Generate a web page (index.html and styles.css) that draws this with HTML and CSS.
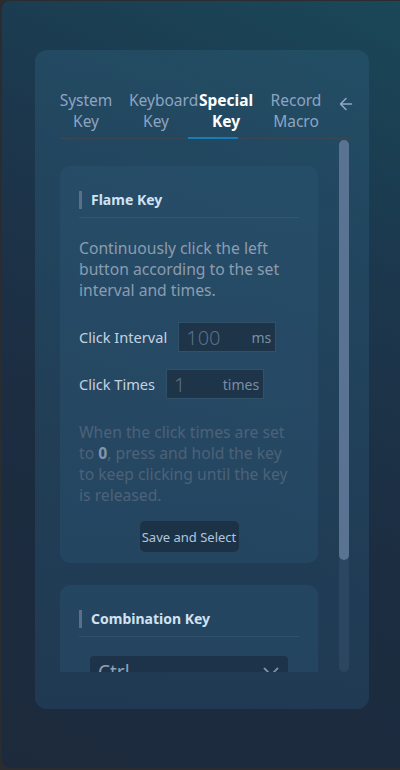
FILE: index.html
```html
<!DOCTYPE html>
<html lang="en">
<head>
<meta charset="utf-8">
<link rel="stylesheet" href="styles.css">
</head>
<body>
<div class="window">
  <div class="panel">
    <div class="tabs">
      <div class="tab">System Key</div>
      <div class="tab">Keyboard Key</div>
      <div class="tab active">Special Key</div>
      <div class="tab">Record Macro</div>
      <div class="back">
        <svg width="14" height="14" viewBox="0 0 14 14"><path d="M12.5 7H1.5M7 1.5L1.5 7L7 12.5" fill="none" stroke="#8fa6c6" stroke-width="1.6" stroke-linecap="round" stroke-linejoin="round"/></svg>
      </div>
      <div class="indicator"></div>
    </div>
    <div class="scroll">
      <div class="scroll-content">
        <div class="card">
          <div class="card-title">Flame Key</div>
          <p class="desc">Continuously click the left button according to the set interval and times.</p>
          <div class="field">
            <span class="label">Click Interval</span>
            <div class="input"><span class="value">100</span><span class="unit">ms</span></div>
          </div>
          <div class="field">
            <span class="label">Click Times</span>
            <div class="input"><span class="value">1</span><span class="unit">times</span></div>
          </div>
          <p class="note">When the click times are set to <b>0</b>, press and hold the key to keep clicking until the key is released.</p>
          <div class="actions"><button class="btn">Save and Select</button></div>
        </div>
        <div class="card">
          <div class="card-title">Combination Key</div>
          <div class="select">
            <span>Ctrl</span>
            <svg width="16" height="10" viewBox="0 0 16 10"><path d="M1.5 1.5L8 8L14.5 1.5" fill="none" stroke="#7d90a8" stroke-width="1.8" stroke-linecap="round" stroke-linejoin="round"/></svg>
          </div>
        </div>
      </div>
      <div class="scrollbar"><div class="thumb"></div></div>
    </div>
  </div>
</div>
</body>
</html>
```
FILE: styles.css
```css
* { box-sizing: border-box; }
html, body { margin: 0; padding: 0; }
body {
  background: #2a2c30;
  width: 400px;
  height: 770px;
  overflow: hidden;
  font-family: "Noto Sans", "Open Sans", sans-serif;
}
.window {
  margin: 1px 0 0 2px;
  width: 398px;
  height: 767px;
  border-radius: 8px 0 0 8px;
  background: linear-gradient(205deg, #1a4858 0%, #1c374d 30%, #1c2d41 60%, #1c2a3c 100%);
  padding: 49px 0 0 33px;
}
.panel {
  width: 334px;
  height: 659px;
  border-radius: 12px;
  background: linear-gradient(180deg, rgba(40, 86, 112, 0.55) 0%, rgba(36, 72, 104, 0.5) 100%);
  padding: 40px 20px 0 24px;
}
.tabs {
  position: relative;
  display: flex;
  gap: 16px;
  border-bottom: 1px solid #3a4555;
  padding-bottom: 6px;
}
.tab {
  width: 54px;
  flex: none;
  text-align: center;
  font-size: 15.5px;
  line-height: 21px;
  color: #8ea4c3;
}
.tab.active {
  color: #ffffff;
  font-weight: 700;
}
.back {
  margin-left: auto;
  margin-right: 1px;
  padding-top: 7px;
  display: flex;
  align-items: flex-start;
}
.indicator {
  position: absolute;
  left: 129px;
  bottom: -1px;
  width: 50px;
  height: 2px;
  background: #1a7cb4;
}
.scroll {
  display: flex;
  height: 533px;
}
.scroll-content {
  flex: 1;
  overflow: hidden;
  padding: 27px 0 0 1px;
}
.scrollbar {
  width: 10px;
  margin-top: 1px;
  border-radius: 5px;
  background: #2c4560;
}
.thumb {
  height: 420px;
  border-radius: 5px;
  background: #5b7393;
}
.card {
  width: 258px;
  border-radius: 10px;
  background: rgba(48, 90, 120, 0.32);
  padding: 25px 19px 10px;
  margin-bottom: 22px;
}
.card-title {
  border-left: 3px solid #5b6f88;
  padding-left: 9px;
  font-size: 14px;
  font-weight: 700;
  line-height: 18px;
  color: #d2e2f2;
  position: relative;
}
.card-title::after {
  content: "";
  display: block;
  position: absolute;
  left: -3px;
  right: 0;
  bottom: -9px;
  height: 1px;
  background: rgba(120, 150, 180, 0.15);
}
.desc {
  margin: 29px 0 0;
  font-size: 15.7px;
  line-height: 21px;
  color: #8c9cb0;
}
.field {
  display: flex;
  align-items: center;
  gap: 11px;
  margin-top: 21px;
}
.field + .field { margin-top: 17px; }
.label {
  font-size: 14.6px;
  color: #c6d2e0;
}
.input {
  width: 98px;
  height: 30px;
  border: 1px solid #31506a;
  background: #1d3449;
  display: flex;
  align-items: center;
  justify-content: space-between;
  padding: 0 4px 0 7px;
}
.value {
  font-size: 20px;
  font-weight: 300;
  color: #5b6f86;
}
.unit {
  font-size: 14px;
  color: #7b8ea4;
}
.note {
  margin: 23px 0 0;
  max-width: 213px;
  font-size: 15.7px;
  line-height: 21px;
  color: #4d6278;
}
.note b {
  font-weight: 700;
  color: #8496ab;
}
.actions {
  display: flex;
  justify-content: center;
  margin-top: 15px;
}
.btn {
  font-family: inherit;
  border: none;
  background: #1c3347;
  color: #b2c5dc;
  font-size: 13px;
  height: 31px;
  width: 99px;
  border-radius: 5px;
  padding: 0;
}
.card + .card { padding-bottom: 12px; }
.card:first-child { padding-bottom: 11px; }
.select {
  margin: 28px 11px 0;
  height: 32px;
  border-radius: 4px;
  background: #1d3349;
  display: flex;
  align-items: center;
  justify-content: space-between;
  padding: 0 9px 0 8px;
  font-size: 19px;
  color: #8ea1b6;
}
```
